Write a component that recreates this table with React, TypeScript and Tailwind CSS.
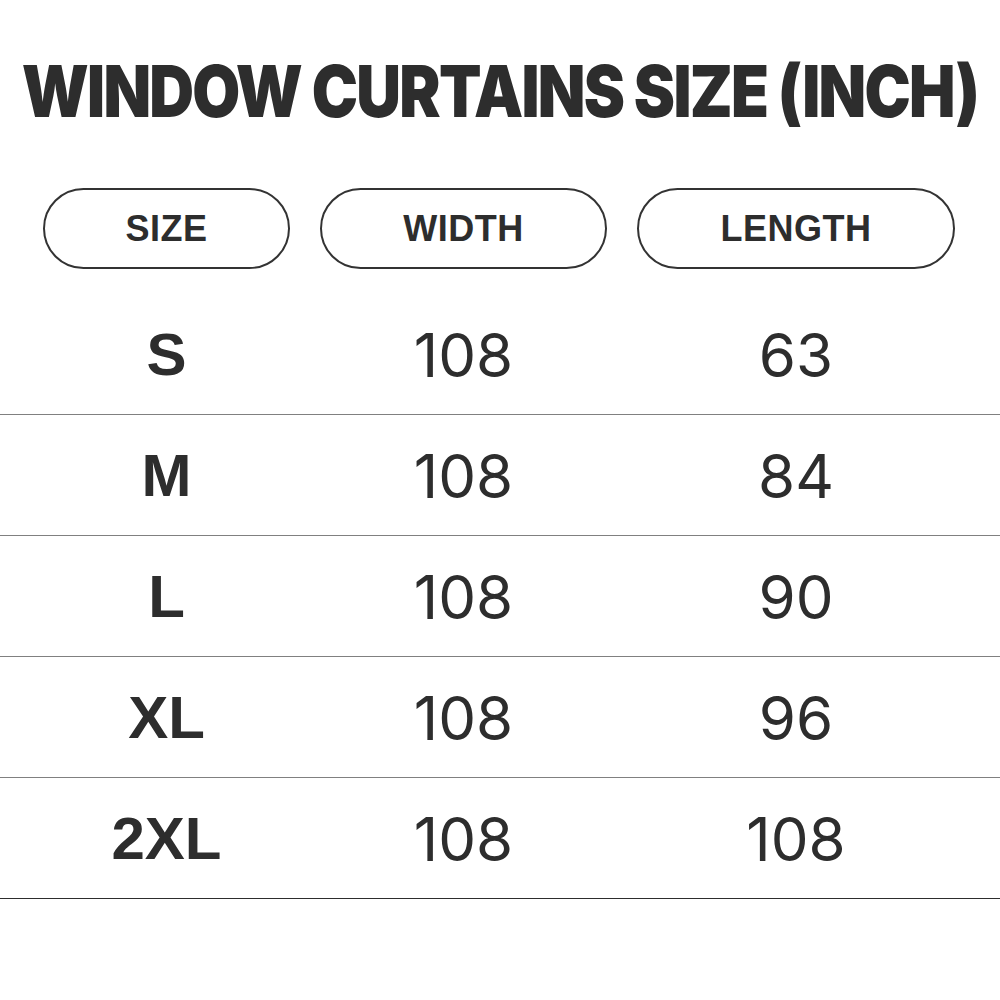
import React from 'react';

const rows = [
  { size: 'S', width: '108', length: '63' },
  { size: 'M', width: '108', length: '84' },
  { size: 'L', width: '108', length: '90' },
  { size: 'XL', width: '108', length: '96' },
  { size: '2XL', width: '108', length: '108' },
];

const Pill: React.FC<{ label: string }> = ({ label }) => (
  <div className="h-[81px] rounded-full border-2 border-[#333] flex items-center justify-center">
    <span className="text-[36px] font-bold tracking-[0.5px] text-[#2d2d2d] font-['Liberation_Sans',sans-serif]">{label}</span>
  </div>
);

const App: React.FC = () => {
  return (
    <div className="w-[1000px] h-[1000px] bg-white text-[#2d2d2d] overflow-hidden">
      <div className="pt-[47px] flex justify-center">
        <h1 className="inline-block scale-x-[0.86] text-[72px] leading-[88px] font-black tracking-[-2px] font-['Inter',sans-serif] whitespace-nowrap">
          WINDOW CURTAINS SIZE (INCH)
        </h1>
      </div>

      <div className="mt-[53px] px-[43px] grid grid-cols-[247px_287px_318px] gap-[30px]">
        <Pill label="SIZE" />
        <Pill label="WIDTH" />
        <Pill label="LENGTH" />
      </div>

      <div className="mt-[25px]">
        {rows.map((r, i) => (
          <div
            key={r.size}
            className={`h-[121px] px-[43px] grid grid-cols-[247px_287px_318px] gap-[30px] items-center pt-[2px] border-b-[1.5px] ${i === rows.length - 1 ? 'border-[#2d2d2d]' : 'border-[#808080]'}`}
          >
            <div className="text-center text-[60px] font-bold font-['Liberation_Sans',sans-serif]">{r.size}</div>
            <div className="text-center text-[60px] font-normal font-['Inter',sans-serif]">{r.width}</div>
            <div className="text-center text-[60px] font-normal font-['Inter',sans-serif]">{r.length}</div>
          </div>
        ))}
      </div>
    </div>
  );
};

export default App;
